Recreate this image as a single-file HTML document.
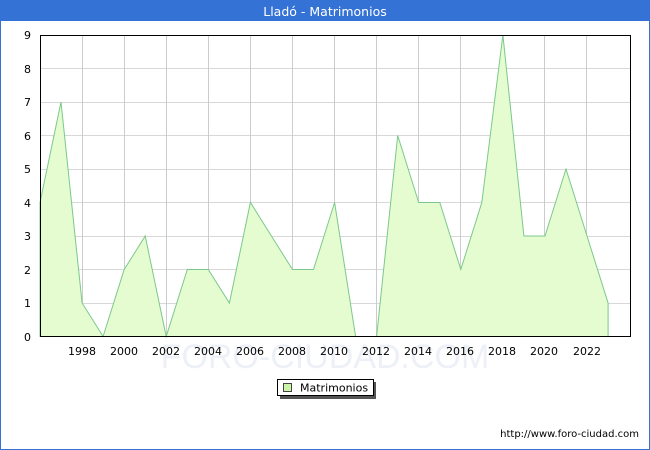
<!DOCTYPE html>
<html><head><meta charset="utf-8"><style>
html,body{margin:0;padding:0;background:#fff}
svg{display:block;font-family:"DejaVu Sans","Liberation Sans",sans-serif}
</style></head><body>
<svg width="650" height="450" viewBox="0 0 650 450" xmlns="http://www.w3.org/2000/svg">
<rect x="0.5" y="0.5" width="649" height="449" fill="#fff" stroke="#3572d6"/>
<rect x="0" y="0" width="650" height="21" fill="#3572d6"/>
<text x="325" y="16" fill="#fff" font-size="12.5" text-anchor="middle">Lladó - Matrimonios</text>
<g stroke="#d8d8d8" stroke-width="1">
<line x1="40" y1="303.5" x2="630" y2="303.5"/><line x1="40" y1="269.5" x2="630" y2="269.5"/>
<line x1="40" y1="236.5" x2="630" y2="236.5"/><line x1="40" y1="202.5" x2="630" y2="202.5"/>
<line x1="40" y1="169.5" x2="630" y2="169.5"/><line x1="40" y1="135.5" x2="630" y2="135.5"/>
<line x1="40" y1="102.5" x2="630" y2="102.5"/><line x1="40" y1="68.5" x2="630" y2="68.5"/>
</g>
<g stroke="#cccccc" stroke-width="1">
<line x1="82.5" y1="35" x2="82.5" y2="337"/><line x1="124.5" y1="35" x2="124.5" y2="337"/>
<line x1="166.5" y1="35" x2="166.5" y2="337"/><line x1="208.5" y1="35" x2="208.5" y2="337"/>
<line x1="250.5" y1="35" x2="250.5" y2="337"/><line x1="292.5" y1="35" x2="292.5" y2="337"/>
<line x1="334.5" y1="35" x2="334.5" y2="337"/><line x1="376.5" y1="35" x2="376.5" y2="337"/>
<line x1="418.5" y1="35" x2="418.5" y2="337"/><line x1="460.5" y1="35" x2="460.5" y2="337"/>
<line x1="502.5" y1="35" x2="502.5" y2="337"/><line x1="544.5" y1="35" x2="544.5" y2="337"/>
<line x1="586.5" y1="35" x2="586.5" y2="337"/>
</g>
<text x="325" y="368" font-size="34" fill="#eef0f8" text-anchor="middle" font-family="Liberation Sans,sans-serif">FORO-CIUDAD.COM</text>
<polygon fill="#e4fcd0" stroke="#7cc88c" stroke-width="1" points="40,336.5 40,202.5 61,102 82.1,303 103.1,336.5 124.2,269.5 145.2,236 166.2,336.5 187.3,269.5 208.3,269.5 229.4,303 250.4,202.5 271.4,236 292.5,269.5 313.5,269.5 334.6,202.5 355.6,336.5 376.6,336.5 397.7,135.5 418.7,202.5 439.8,202.5 460.8,269.5 481.8,202.5 502.9,35 523.9,236 545,236 566,169 587,236 608.1,303 608.1,336.5"/>
<rect x="40.5" y="35.5" width="590" height="301" fill="none" stroke="#000"/>
<g font-size="11" fill="#000" text-anchor="end">
<text x="31" y="341">0</text><text x="31" y="307">1</text><text x="31" y="274">2</text>
<text x="31" y="240">3</text><text x="31" y="207">4</text><text x="31" y="173">5</text>
<text x="31" y="140">6</text><text x="31" y="106">7</text><text x="31" y="73">8</text><text x="31" y="39">9</text>
</g>
<g font-size="11" fill="#000" text-anchor="middle">
<text x="82" y="355">1998</text><text x="124" y="355">2000</text><text x="166" y="355">2002</text>
<text x="208" y="355">2004</text><text x="250" y="355">2006</text><text x="292" y="355">2008</text>
<text x="334" y="355">2010</text><text x="376" y="355">2012</text><text x="418" y="355">2014</text>
<text x="460" y="355">2016</text><text x="502" y="355">2018</text><text x="544" y="355">2020</text>
<text x="587" y="355">2022</text>
</g>
<rect x="280" y="382" width="96" height="17" fill="#555"/>
<rect x="277.5" y="379.5" width="96" height="16" fill="#fff" stroke="#000"/>
<rect x="283.5" y="383.5" width="8" height="8" fill="#ccf5a8" stroke="#444"/>
<text x="300" y="391.5" font-size="11" fill="#000">Matrimonios</text>
<text x="639" y="437" font-size="10" fill="#000" text-anchor="end">http://www.foro-ciudad.com</text>
</svg>
</body></html>
